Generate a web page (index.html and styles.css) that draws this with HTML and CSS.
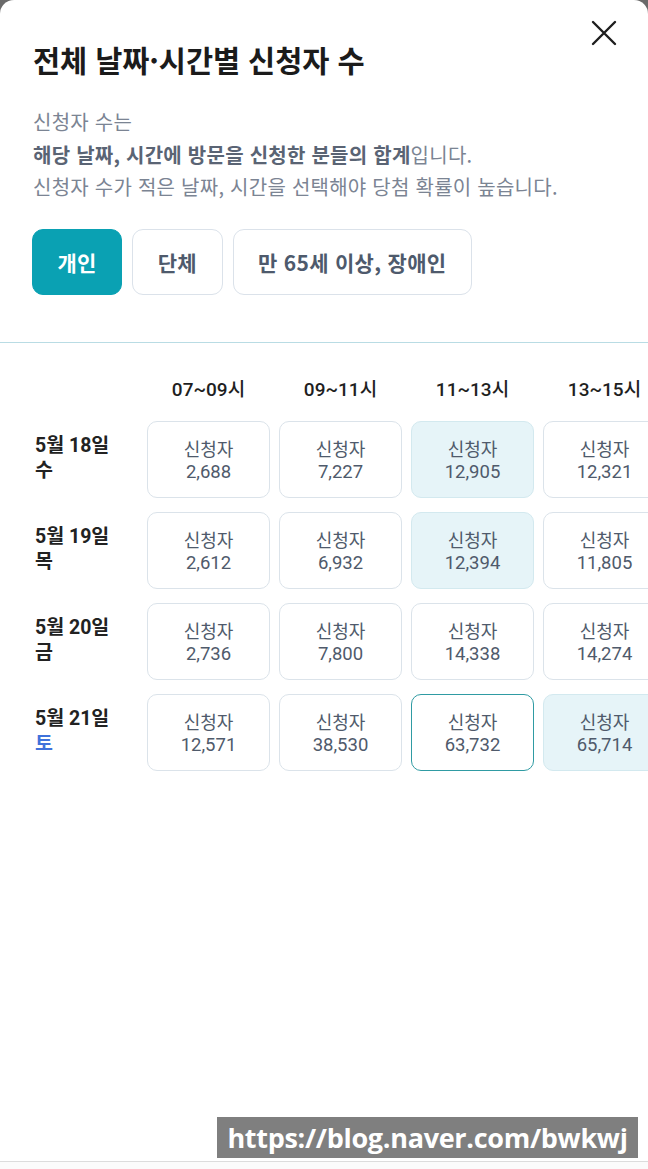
FILE: index.html
```html
<!DOCTYPE html>
<html lang="ko">
<head>
<meta charset="utf-8">
<title>전체 날짜·시간별 신청자 수</title>
<link rel="stylesheet" href="styles.css">
</head>
<body>
<div class="page">
  <div class="sheet">
    <section class="top">
      <header class="header">
        <h1 class="title">전체 날짜·시간별 신청자 수</h1>
        <button class="close" aria-label="닫기">
          <svg width="26" height="26" viewBox="0 0 26 26"><path d="M2 2 L24 24 M24 2 L2 24" stroke="#1e1e1e" stroke-width="2.4" stroke-linecap="round" fill="none"/></svg>
        </button>
      </header>
      <p class="desc">신청자 수는<br><strong>해당 날짜, 시간에 방문을 신청한 분들의 합계</strong>입니다.<br>신청자 수가 적은 날짜, 시간을 선택해야 당첨 확률이 높습니다.</p>
      <div class="tabs">
        <button class="tab active">개인</button>
        <button class="tab">단체</button>
        <button class="tab">만 65세 이상, 장애인</button>
      </div>
    </section>
    <div class="divider"></div>
    <section class="table">
      <div class="grid">
        <div class="corner"></div>
        <div class="th">07~09시</div>
        <div class="th">09~11시</div>
        <div class="th">11~13시</div>
        <div class="th">13~15시</div>

        <div class="date"><span>5월 18일</span><span>수</span></div>
        <div class="cell"><span>신청자</span><span>2,688</span></div>
        <div class="cell"><span>신청자</span><span>7,227</span></div>
        <div class="cell hl"><span>신청자</span><span>12,905</span></div>
        <div class="cell"><span>신청자</span><span>12,321</span></div>

        <div class="date"><span>5월 19일</span><span>목</span></div>
        <div class="cell"><span>신청자</span><span>2,612</span></div>
        <div class="cell"><span>신청자</span><span>6,932</span></div>
        <div class="cell hl"><span>신청자</span><span>12,394</span></div>
        <div class="cell"><span>신청자</span><span>11,805</span></div>

        <div class="date"><span>5월 20일</span><span>금</span></div>
        <div class="cell"><span>신청자</span><span>2,736</span></div>
        <div class="cell"><span>신청자</span><span>7,800</span></div>
        <div class="cell"><span>신청자</span><span>14,338</span></div>
        <div class="cell"><span>신청자</span><span>14,274</span></div>

        <div class="date"><span>5월 21일</span><span class="sat">토</span></div>
        <div class="cell"><span>신청자</span><span>12,571</span></div>
        <div class="cell"><span>신청자</span><span>38,530</span></div>
        <div class="cell sel"><span>신청자</span><span>63,732</span></div>
        <div class="cell hl"><span>신청자</span><span>65,714</span></div>
      </div>
    </section>
    <div class="watermark">https://blog.naver.com/bwkwj</div>
  </div>
  <div class="foot"></div>
</div>
</body>
</html>
```

FILE: styles.css
```css
html, body {
  margin: 0;
  padding: 0;
}
body {
  background: #6a6a6a;
  font-family: Roboto, "Noto Sans CJK KR", sans-serif;
  color: #222;
}
.page {
  width: 648px;
  height: 1169px;
  overflow: hidden;
}
.sheet {
  position: relative;
  height: 1162px;
  background: #fff;
  border-radius: 14px 14px 0 0;
  border-bottom: 1px solid #dcdcdc;
  box-sizing: border-box;
  overflow: hidden;
}
.foot {
  height: 7px;
  background: #fbfbfb;
}
.top {
  padding: 20px 31px 47px 33px;
}
.header {
  display: flex;
  justify-content: space-between;
  align-items: flex-start;
}
.title {
  margin: 21px 0 0;
  font-family: "Noto Sans CJK KR", sans-serif;
  font-size: 29.5px;
  line-height: 36px;
  font-weight: 700;
  letter-spacing: -0.1px;
  color: #1b1b1b;
}
.close {
  border: 0;
  background: none;
  padding: 0;
  width: 26px;
  height: 26px;
  display: flex;
}
.desc {
  margin: 29px 0 0;
  font-family: "Noto Sans CJK KR", sans-serif;
  font-size: 20px;
  line-height: 32.5px;
  letter-spacing: 0.25px;
  color: #7b8493;
}
.desc strong {
  font-weight: 700;
  color: #5a6474;
}
.tabs {
  display: flex;
  gap: 10px;
  margin-top: 25px;
  margin-left: -1px;
}
.tab {
  height: 66px;
  padding: 0 24.5px;
  border: 1px solid #dbe2ea;
  border-radius: 11px;
  background: #fff;
  font-family: "Noto Sans CJK KR", sans-serif;
  font-size: 21px;
  font-weight: 700;
  letter-spacing: 0.3px;
  color: #4e5a6c;
}
.tab.active {
  background: #0aa1b3;
  border-color: #0aa1b3;
  color: #fff;
}
.divider {
  height: 1px;
  background: #b9dce4;
}
.table {
  padding: 35px 0 0 35px;
}
.grid {
  display: grid;
  grid-template-columns: 103px repeat(4, 123px);
  column-gap: 9px;
  row-gap: 14px;
  width: 700px;
}
.th {
  height: 29px;
  line-height: 24px;
  text-align: center;
  font-size: 19px;
  font-weight: 500;
  color: #1f1f1f;
}
.date {
  display: flex;
  flex-direction: column;
  justify-content: center;
  font-size: 19.5px;
  line-height: 25px;
  font-weight: 700;
  color: #222;
  letter-spacing: 0;
  padding-bottom: 2px;
}
.sat {
  color: #3f72db;
}
.cell {
  height: 77px;
  box-sizing: border-box;
  border: 1px solid #dbe3ea;
  border-radius: 10px;
  padding-top: 3px;
  display: flex;
  flex-direction: column;
  justify-content: center;
  align-items: center;
  text-align: center;
  font-size: 18px;
  line-height: 22px;
  color: #4f5a6b;
}
.cell span + span {
  font-size: 18.5px;
}
.cell.hl {
  background: #e6f4f8;
  border-color: #d3e9ef;
}
.cell.sel {
  border-color: #2f9ba3;
}
.watermark {
  position: absolute;
  left: 217px;
  top: 1117px;
  width: 421px;
  height: 41px;
  background: #7f7f7f;
  color: #fff;
  font-family: "Open Sans", sans-serif;
  font-weight: 700;
  font-size: 27px;
  line-height: 41px;
  text-align: center;
  letter-spacing: -0.3px;
  white-space: nowrap;
}
```
